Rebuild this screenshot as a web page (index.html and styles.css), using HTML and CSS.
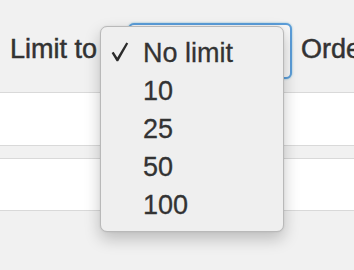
FILE: index.html
```html
<!DOCTYPE html>
<html lang="en">
<head>
<meta charset="utf-8">
<link rel="stylesheet" href="styles.css">
</head>
<body>
<div class="page">
  <div class="toolbar">
    <span class="label">Limit to</span>
    <div class="select">
      <div class="menu">
        <div class="item selected">
          <span class="check"><svg width="18" height="20" viewBox="0 0 18 20"><path d="M0.6 11 L2.6 9.8 L6.3 15.4 L15.3 0.6 L17.2 1.6 L7.2 19.2 L5.6 19.2 Z" fill="#2b2b2b"/></svg></span>
          <span class="text">No limit</span>
        </div>
        <div class="item"><span class="check"></span><span class="text">10</span></div>
        <div class="item"><span class="check"></span><span class="text">25</span></div>
        <div class="item"><span class="check"></span><span class="text">50</span></div>
        <div class="item"><span class="check"></span><span class="text">100</span></div>
      </div>
    </div>
    <span class="label order">Order</span>
  </div>
  <div class="row"></div>
  <div class="row second"></div>
</div>
</body>
</html>
```

FILE: styles.css
```css
html, body {
  margin: 0;
  padding: 0;
}
body {
  background: #f1f1f1;
  font-family: "Liberation Sans", Arial, sans-serif;
  color: #333;
  width: 354px;
  height: 270px;
  overflow: hidden;
}
.page {
  width: 354px;
}
.toolbar {
  box-sizing: border-box;
  height: 93px;
  padding: 23px 0 0 10px;
  display: flex;
  align-items: flex-start;
  border-bottom: 1px solid #d9d9d9;
  white-space: nowrap;
}
.label {
  font-size: 27px;
  line-height: 32px;
  margin-top: 10px;
  color: #333;
  -webkit-text-stroke: 0.5px #333;
}
.select {
  position: relative;
  box-sizing: border-box;
  width: 164px;
  height: 56px;
  margin-left: 31px;
  border: 2px solid #5b9dd9;
  border-radius: 6px;
  background: #f7f7f7;
  box-shadow: 0 0 2px rgba(30, 140, 190, 0.6);
  flex-shrink: 0;
}
.order {
  margin-left: 9px;
}
.menu {
  position: absolute;
  left: -30px;
  top: 1px;
  box-sizing: border-box;
  width: 184px;
  height: 206px;
  padding: 7px 0 0 0;
  background: #efefef;
  border: 1px solid #b9b9b9;
  border-radius: 7px;
  box-shadow: 0 7px 16px rgba(0, 0, 0, 0.22), 0 0 2px rgba(0, 0, 0, 0.1);
  z-index: 10;
}
.item {
  display: flex;
  align-items: flex-start;
  height: 38px;
  font-size: 27px;
  line-height: 38px;
  color: #333;
  -webkit-text-stroke: 0.3px #333;
}
.check {
  box-sizing: border-box;
  width: 42px;
  padding: 8px 0 0 10px;
  height: 38px;
  line-height: 0;
  flex-shrink: 0;
}
.row {
  height: 52px;
  background: #fff;
  border-bottom: 1px solid #d9d9d9;
}
.row.second {
  margin-top: 12px;
  border-top: 1px solid #d9d9d9;
  height: 51px;
}
```
